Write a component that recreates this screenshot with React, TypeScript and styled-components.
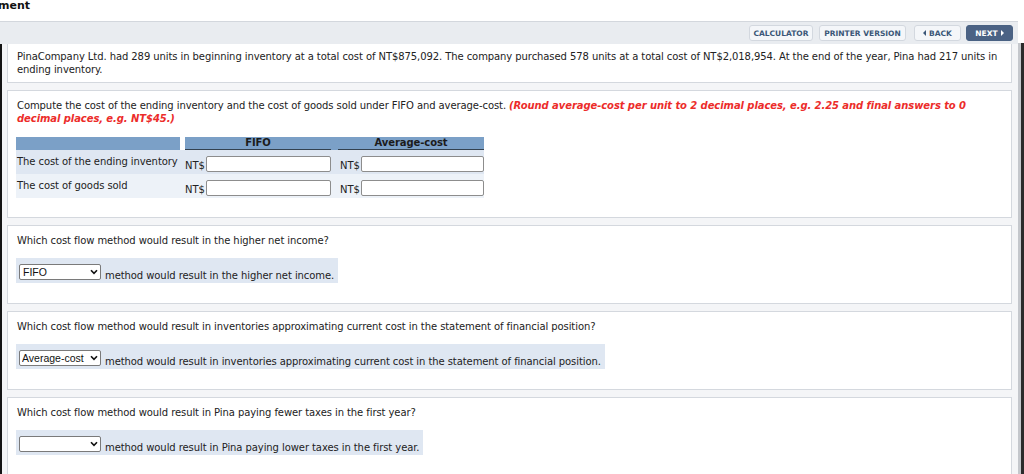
import React from "react";
import styled, { createGlobalStyle } from "styled-components";

const GlobalStyle = createGlobalStyle`
  html, body {
    margin: 0;
    padding: 0;
    background: #ffffff;
    overflow: hidden;
  }
  body {
    font-family: "DejaVu Sans", Verdana, sans-serif;
    font-size: 10px;
    letter-spacing: -0.08px;
    color: #222;
  }
`;

const Page = styled.div`
  width: 1024px;
  height: 474px;
  display: flex;
  flex-direction: column;
  overflow: hidden;
`;

const Title = styled.div`
  height: 21px;
  font-size: 11px;
  font-weight: bold;
  color: #111;
  line-height: 12px;
  margin-left: -2px;
  letter-spacing: 0;
`;

const Window = styled.div`
  flex: 1;
  display: flex;
  min-height: 0;
`;

const Main = styled.div`
  flex: 1;
  display: flex;
  flex-direction: column;
  min-height: 0;
`;

const Edge = styled.div`
  width: 3px;
  margin-top: 22px;
  border-left: 3px solid #c4c7cc;
  background: #2b2b2b;
`;

const Toolbar = styled.div`
  height: 22px;
  border-top: 1px solid #d3d7dd;
  background: #e9ecf0;
  display: flex;
  align-items: center;
  justify-content: flex-end;
  padding-right: 5px;
  gap: 6px;
`;

const ToolButton = styled.button<{ $primary?: boolean; $gap?: number; $w: number }>`
  width: ${(p) => p.$w}px;
  height: 16px;
  padding: 0;
  margin-left: ${(p) => p.$gap ?? 0}px;
  border: 1px solid ${(p) => (p.$primary ? "#4a6283" : "#d3d8df")};
  border-radius: 3px;
  background: ${(p) => (p.$primary ? "#4b6284" : "#f4f6f9")};
  color: ${(p) => (p.$primary ? "#ffffff" : "#3b5677")};
  font-family: "DejaVu Sans", Verdana, sans-serif;
  font-size: 7.5px;
  font-weight: bold;
  letter-spacing: 0;
  white-space: nowrap;
  display: flex;
  align-items: center;
  justify-content: center;
  gap: 3px;
`;

const Tri = styled.span<{ $left?: boolean }>`
  width: 0;
  height: 0;
  border-top: 3px solid transparent;
  border-bottom: 3px solid transparent;
  ${(p) =>
    p.$left
      ? "border-right: 3px solid #3b5677;"
      : "border-left: 3px solid #ffffff;"}
`;

const Content = styled.div`
  flex: 1;
  min-height: 0;
  overflow: hidden;
  border-left: 2px solid #141414;
  background: #f4f5f7;
  padding: 0 6px 0 5px;
  display: flex;
  flex-direction: column;
  gap: 7px;
`;

const Panel = styled.div<{ $cut?: boolean; $bottom?: number }>`
  background: #ffffff;
  border: 1px solid #d4d8de;
  ${(p) => (p.$cut ? "border-top: none;" : "")}
  padding: ${(p) => (p.$cut ? "6px 9px 6px 9px" : `8px 9px ${p.$bottom ?? 19}px 9px`)};
  flex-shrink: 0;
`;

const Text = styled.p`
  margin: 0;
  line-height: 13px;
`;

const Warn = styled.em`
  color: #ec2c2a;
  font-weight: bold;
`;

const Table = styled.div`
  margin-top: 12px;
  width: 468px;
  margin-left: -1px;
  display: grid;
  grid-template-columns: 164px 151px 7px 146px;
`;

const HeadCell = styled.div<{ $line?: boolean }>`
  height: 13px;
  background: #7ba0c7;
  font-weight: bold;
  color: #1b1b1b;
  text-align: center;
  line-height: 12px;
  ${(p) => (p.$line ? "box-shadow: inset 0 -1px 0 #33414f;" : "")}
`;

const HeadLine = styled.div`
  height: 13px;
  background: #7ba0c7;
  box-shadow: inset 0 -1px 0 #33414f;
  margin-left: 5px;
  text-align: center;
  font-weight: bold;
  line-height: 12px;
  color: #1b1b1b;
`;

const RowCell = styled.div<{ $alt?: boolean }>`
  height: 24px;
  background: ${(p) => (p.$alt ? "#edf2f8" : "#dfe7f2")};
  display: flex;
  align-items: center;
`;

const Label = styled(RowCell)`
  padding-left: 1px;
  padding-bottom: 1px;
  box-sizing: border-box;
  white-space: nowrap;
`;

const Money = styled(RowCell)<{ $indent: number }>`
  padding-left: ${(p) => p.$indent}px;
  padding-top: 4px;
  box-sizing: border-box;
  gap: 1px;
`;

const Prefix = styled.span`
  padding-top: 3px;
`;

const Field = styled.input`
  flex: 1;
  min-width: 0;
  height: 16px;
  box-sizing: border-box;
  border: 1px solid #8d8d8d;
  border-radius: 2px;
  background: #fff;
  margin: 0;
  padding: 0 2px;
`;

const Answer = styled.div`
  margin-top: 11px;
  margin-left: -1px;
  width: fit-content;
  height: 25px;
  box-sizing: border-box;
  background: #dfe7f2;
  display: flex;
  align-items: center;
  padding: 0 4px 0 3px;
  gap: 4px;
`;

const SelectWrap = styled.div`
  position: relative;
  width: 82px;
  height: 16px;
  margin-top: 2px;
`;

const Select = styled.select<{ $fit?: boolean }>`
  appearance: none;
  width: 100%;
  height: 16px;
  box-sizing: border-box;
  border: 1px solid #7a7a7a;
  border-radius: 2px;
  background: #fff;
  font-family: "Liberation Sans", Arial, sans-serif;
  font-size: 10.5px;
  color: #111;
  padding: 0 0 0 ${(p) => (p.$fit ? 2 : 3)}px;
  margin: 0;
`;

const Chevron = styled.svg`
  position: absolute;
  right: 3px;
  top: 5px;
  pointer-events: none;
`;

const AnswerText = styled.span`
  padding-top: 10px;
`;

function Dropdown({ value, fit }: { value: string; fit?: boolean }) {
  return (
    <SelectWrap>
      <Select $fit={fit} value={value} onChange={() => {}}>
        <option value=""></option>
        <option value="FIFO">FIFO</option>
        <option value="Average-cost">Average-cost</option>
      </Select>
      <Chevron width="8" height="6" viewBox="0 0 8 6">
        <path d="M1 1.2 L4 4.4 L7 1.2" fill="none" stroke="#111" strokeWidth="1.6" />
      </Chevron>
    </SelectWrap>
  );
}

const rows = [
  { label: "The cost of the ending inventory", alt: false },
  { label: "The cost of goods sold", alt: true },
];

const questions = [
  {
    q: "Which cost flow method would result in the higher net income?",
    value: "FIFO",
    a: "method would result in the higher net income.",
  },
  {
    q: "Which cost flow method would result in inventories approximating current cost in the statement of financial position?",
    value: "Average-cost",
    a: "method would result in inventories approximating current cost in the statement of financial position.",
    fit: true,
  },
  {
    q: "Which cost flow method would result in Pina paying fewer taxes in the first year?",
    value: "",
    a: "method would result in Pina paying lower taxes in the first year.",
  },
];

export default function App() {
  return (
    <Page>
      <GlobalStyle />
      <Title>ment</Title>
      <Window>
        <Main>
          <Toolbar>
            <ToolButton $w={64}>CALCULATOR</ToolButton>
            <ToolButton $w={87}>PRINTER VERSION</ToolButton>
            <ToolButton $gap={2} $w={47}>
              <Tri $left />
              BACK
            </ToolButton>
            <ToolButton $primary $gap={-1} $w={47}>
              NEXT
              <Tri />
            </ToolButton>
          </Toolbar>
          <Content>
            <Panel $cut>
              <Text>
                PinaCompany Ltd. had 289 units in beginning inventory at a total cost of NT$875,092. The
                company purchased 578 units at a total cost of NT$2,018,954. At the end of the year, Pina had
                217 units in ending inventory.
              </Text>
            </Panel>
            <Panel>
              <Text>
                Compute the cost of the ending inventory and the cost of goods sold under FIFO and
                average-cost.{" "}
                <Warn>
                  (Round average-cost per unit to 2 decimal places, e.g. 2.25 and final answers to 0 decimal
                  places, e.g. NT$45.)
                </Warn>
              </Text>
              <Table>
                <HeadCell />
                <HeadLine>FIFO</HeadLine>
                <HeadCell />
                <HeadCell $line>Average-cost</HeadCell>
                {rows.map((r) => (
                  <React.Fragment key={r.label}>
                    <Label $alt={r.alt}>{r.label}</Label>
                    <Money $alt={r.alt} $indent={5}>
                      <Prefix>NT$</Prefix>
                      <Field />
                    </Money>
                    <RowCell $alt={r.alt} />
                    <Money $alt={r.alt} $indent={2}>
                      <Prefix>NT$</Prefix>
                      <Field />
                    </Money>
                  </React.Fragment>
                ))}
              </Table>
            </Panel>
            {questions.map((item) => (
              <Panel key={item.q} $bottom={20}>
                <Text>{item.q}</Text>
                <Answer>
                  <Dropdown value={item.value} fit={item.fit} />
                  <AnswerText>{item.a}</AnswerText>
                </Answer>
              </Panel>
            ))}
          </Content>
        </Main>
        <Edge />
      </Window>
    </Page>
  );
}
